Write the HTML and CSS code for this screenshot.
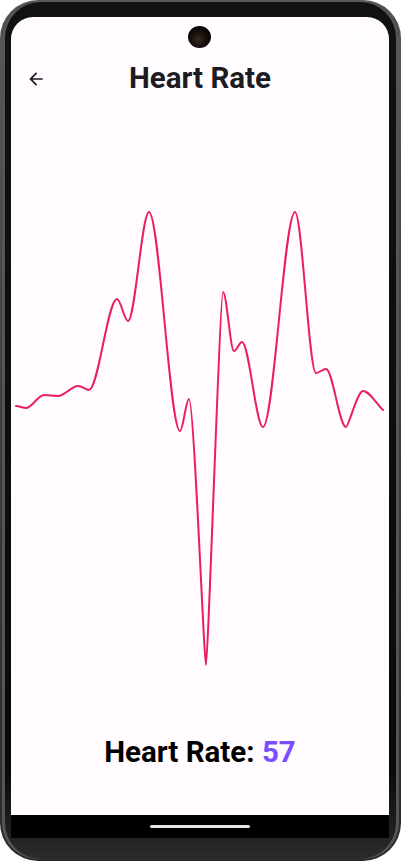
FILE: index.html
```html
<!DOCTYPE html>
<html lang="en">
<head>
<meta charset="utf-8">
<title>Heart Rate</title>
<link rel="stylesheet" href="styles.css">
</head>
<body>
<div class="device">
  <div class="bezel">
    <div class="screen">
      <div class="status-bar">
        <span class="status-time">12:54</span>
        <span class="status-icons">▾◢▮</span>
        <span class="camera"></span>
      </div>
      <header class="app-bar">
        <button class="back-btn" aria-label="Back">
          <svg width="24" height="24" viewBox="0 0 24 24"><path d="M20 11H7.83l5.59-5.59L12 4l-8 8 8 8 1.41-1.41L7.83 13H20v-2z" fill="#1c1b1f"/></svg>
        </button>
        <h1 class="title">Heart Rate</h1>
      </header>
      <div class="chart">
        <svg class="chart-svg" width="378" height="626" viewBox="11 109 378 626">
          <path fill="none" stroke="#e91e63" stroke-width="2" stroke-linecap="round" stroke-linejoin="round"
            d="M16 406 C19.3 406 22.7 408 26 408 C32 408 38 395 44 395 C48.7 395 53.3 396 58 396 C64.7 396 71.3 386 78 386 C82.7 386 85.3 390 89 390 C98.3 390 107.7 299 117 299 C120.7 299 124.3 321 128 321 C135 321 142 212 149 212 C159.3 212 169.7 431 180 431 C183 431 186 399 189 399 C194 399 204 665 206 665 C208 665 220 292 223 292 C226.7 292 230.3 351 234 351 C236.7 351 239.3 342 242 342 C249 342 256 427 263 427 C273.7 427 284.3 212 295 212 C302 212 309 373 316 373 C319.3 373 322.7 369 326 369 C332.7 369 339.3 427 346 427 C348.7 427 357.3 391 363 391 C369.7 391 376.3 404 383 410"/>
        </svg>
      </div>
      <div class="reading">Heart Rate: <span class="bpm">57</span></div>
    </div>
    <div class="nav-bar"><span class="home-pill"></span></div>
  </div>
</div>
</body>
</html>
```
FILE: styles.css
```css
* { box-sizing: border-box; }
html, body { margin: 0; padding: 0; }
body {
  width: 401px;
  height: 863px;
  background: #ffffff;
  overflow: hidden;
  font-family: Roboto, "Noto Sans", sans-serif;
}
.device {
  width: 401px;
  height: 861px;
  border-radius: 38px;
  background: linear-gradient(#5a5a5a, #3c3c3c 50%, #2a2a2a);
  padding: 2px;
}
.bezel {
  height: 100%;
  border-radius: 36px;
  background: linear-gradient(#111 0%, #0a0a0a 90%, #2b2b2b 100%);
  padding: 15px 10px 0 9px;
  box-shadow: inset 3px 0 0 #555, inset -3px 0 0 #555;
}
.screen {
  position: relative;
  width: 378px;
  height: 798px;
  background: #fffbfe;
  border-radius: 22px 22px 0 0;
  display: flex;
  flex-direction: column;
  overflow: hidden;
}
.status-bar {
  height: 30px;
  display: flex;
  align-items: center;
  justify-content: space-between;
  padding: 0 24px 0 44px;
  color: #ffffff;
  font-size: 13px;
}
.camera {
  position: absolute;
  left: 177px;
  top: 9px;
  width: 23px;
  height: 22px;
  border-radius: 50%;
  background: radial-gradient(circle at 45% 60%, #3a2a20 0%, #120c0a 45%, #050505 70%);
}
.app-bar {
  position: relative;
  height: 62px;
  display: flex;
  align-items: center;
  justify-content: center;
}
.back-btn {
  position: absolute;
  left: 13px;
  top: 20px;
  width: 24px;
  height: 24px;
  padding: 0;
  border: 0;
  background: none;
  display: flex;
}
.back-btn svg { width: 20px; height: 20px; margin: 2px; }
.title {
  margin: 0;
  font-size: 29.5px;
  font-weight: 700;
  line-height: 33px;
  color: #1c1b1f;
}
.chart {
  height: 626px;
  flex: none;
}
.chart-svg { display: block; }
.reading {
  text-align: center;
  font-size: 29.5px;
  font-weight: 700;
  line-height: 34px;
  color: #000000;
}
.bpm { color: #7c4dff; }
.nav-bar {
  width: 378px;
  height: 23px;
  background: #000;
  display: flex;
  justify-content: center;
  padding-top: 10px;
}
.home-pill {
  width: 100px;
  height: 3px;
  border-radius: 2px;
  background: #e6e6e6;
}
```
